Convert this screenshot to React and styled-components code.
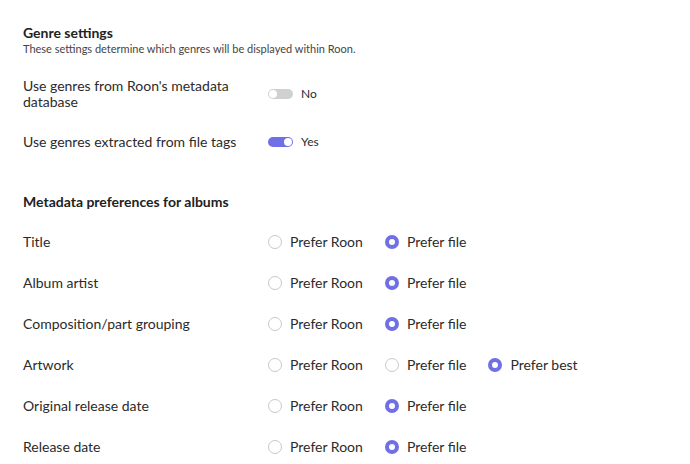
import styled, { createGlobalStyle } from "styled-components";

const Global = createGlobalStyle`
  body {
    margin: 0;
    background: #fff;
    font-family: Lato, "Open Sans", sans-serif;
    color: #2b2b2b;
  }
`;

const Page = styled.div`
  padding: 24px 23px 0;
`;

const Heading = styled.h2`
  margin: 0;
  margin-top: ${(p) => p.$top || 0}px;
  font-size: 14px;
  line-height: 18px;
  font-weight: 700;
  color: #222;
`;

const Sub = styled.p`
  margin: 0;
  font-size: 11px;
  line-height: 13px;
  color: #444;
`;

const Row = styled.div`
  display: grid;
  grid-template-columns: 245px auto;
  align-items: center;
  font-size: 14px;
  line-height: 16px;
  margin-top: ${(p) => p.$top || 0}px;
  height: ${(p) => (p.$h ? `${p.$h}px` : "auto")};
`;

const Label = styled.div`
  max-width: 215px;
`;

const ToggleWrap = styled.div`
  display: flex;
  align-items: center;
  gap: 8px;
  font-size: 12px;
`;

const Track = styled.span`
  position: relative;
  width: 25px;
  height: 10px;
  border-radius: 5px;
  background: ${(p) => (p.$on ? "#6f6fe6" : "#d0d0d0")};
`;

const Knob = styled.span`
  position: absolute;
  top: 1px;
  left: ${(p) => (p.$on ? "16px" : "1px")};
  width: 8px;
  height: 8px;
  border-radius: 50%;
  background: #fff;
`;

const List = styled.div`
  margin-top: 10px;
`;

const Options = styled.div`
  display: flex;
  align-items: center;
  gap: 22px;
`;

const Option = styled.label`
  display: inline-flex;
  align-items: center;
  gap: 8px;
`;

const Dot = styled.span`
  box-sizing: border-box;
  width: 14px;
  height: 14px;
  border-radius: 50%;
  border: ${(p) => (p.$on ? "4.5px solid #6f6fe6" : "1.5px solid #c8c8c8")};
  background: #fff;
`;

function Toggle({ on, text }) {
  return (
    <ToggleWrap>
      <Track $on={on}>
        <Knob $on={on} />
      </Track>
      {text}
    </ToggleWrap>
  );
}

const prefs = [
  ["Title", 1, 2],
  ["Album artist", 1, 2],
  ["Composition/part grouping", 1, 2],
  ["Artwork", 2, 3],
  ["Original release date", 1, 2],
  ["Release date", 1, 2],
];

const names = ["Prefer Roon", "Prefer file", "Prefer best"];

export default function App() {
  return (
    <Page>
      <Global />
      <Heading>Genre settings</Heading>
      <Sub>These settings determine which genres will be displayed within Roon.</Sub>
      <Row $top={23}>
        <Label>Use genres from Roon's metadata database</Label>
        <Toggle on={false} text="No" />
      </Row>
      <Row $top={24}>
        <Label>Use genres extracted from file tags</Label>
        <Toggle on text="Yes" />
      </Row>
      <Heading $top={43}>Metadata preferences for albums</Heading>
      <List>
        {prefs.map(([label, sel, count]) => (
          <Row key={label} $h={41}>
            <Label>{label}</Label>
            <Options>
              {names.slice(0, count).map((n, i) => (
                <Option key={n}>
                  <Dot $on={i === sel} />
                  {n}
                </Option>
              ))}
            </Options>
          </Row>
        ))}
      </List>
    </Page>
  );
}
